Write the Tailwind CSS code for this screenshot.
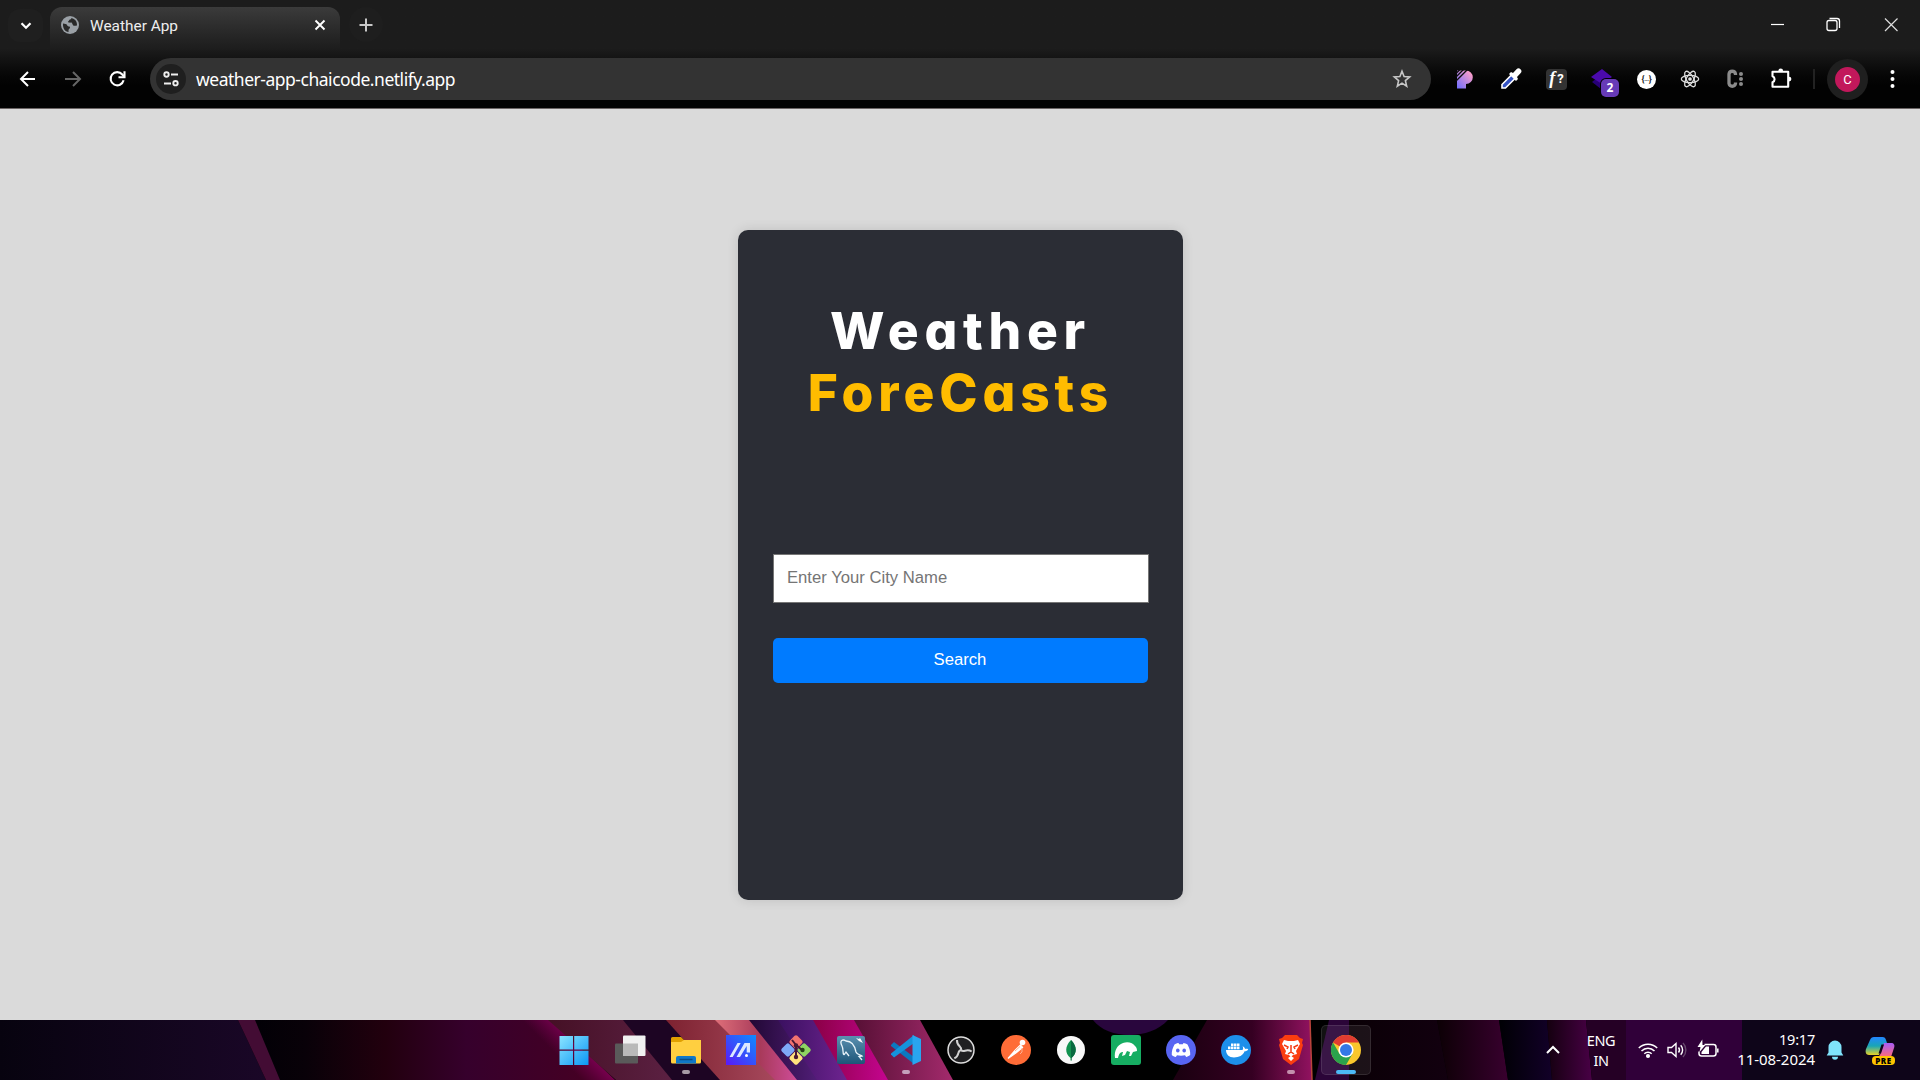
<!DOCTYPE html>
<html lang="en">
<head>
<meta charset="utf-8">
<title>Weather App</title>
<script src="https://cdn.jsdelivr.net/npm/@tailwindcss/browser@4"></script>
</head>
<body class="flex h-[1080px] w-[1920px] flex-col overflow-hidden bg-[#dadada] font-['Noto_Sans',sans-serif]">

<!-- Browser tab strip -->
<header class="flex h-[109px] shrink-0 flex-col border-b border-[#6b6565] bg-linear-to-b from-[#1c1c1c] from-45% to-[#020202] to-80%">
  <div class="flex h-[50px] items-start pt-[7px]">
    <div class="ml-2 mt-0.5 flex h-[33px] w-[35px] items-center justify-center rounded-xl bg-[#1f1f1f]">
      <svg class="size-5" viewBox="0 0 20 20" fill="none" stroke="#fff" stroke-width="2.2"><path d="M5.5 7.2l4.5 4.6 4.5-4.6"/></svg>
    </div>
    <div class="ml-[7px] flex h-[43px] w-[290px] items-start rounded-t-xl bg-linear-to-b from-[#3b3b3b] to-[#1c1c1c] pt-[9px]">
      <svg class="ml-[11px] size-[18px]" viewBox="0 0 18 18"><circle cx="9" cy="9" r="9" fill="#9aa0a6"/><path d="M2 7.4c2 .2 3.500 .4 4 1.600s1.500 1.500 2.600 1.500c.8 1 .4 2-.6 2.500-.7 1-.5 2-.4 3C4 15.500 1.600 12.300 2 7.400zM10.500 2.100c-.3 1-1.100 1.500-2.100 1.700-.4 1-1 1.600-1.500 2 .6 1.200 2.600.8 3.700.8 1.100 1.200.8 2.400 2 3.100.9.300 2-.1 3.400-.3.300-3.700-2-6.500-5.500-7.300z" fill="#292929"/></svg>
      <span class="ml-[11px] flex-1 pt-px font-[Roboto] text-[15.400px] leading-[18px] text-[#eee]">Weather App</span>
      <svg class="mr-[11px] size-[18px]" viewBox="0 0 18 18" stroke="#fff" stroke-width="1.900"><path d="M4.500 4.500l9 9M13.500 4.500l-9 9"/></svg>
    </div>
    <div class="ml-[9px] mt-0 flex h-[35px] w-[34px] items-center justify-center rounded-full bg-[#1e1e1e]">
      <svg class="size-5" viewBox="0 0 20 20" stroke="#c8c8c8" stroke-width="2"><path d="M10 3.500v13M3.500 10h13"/></svg>
    </div>
    <div class="ml-auto mt-[7px] flex h-5 items-center pr-[19px]">
      <svg class="size-5" viewBox="0 0 20 20" stroke="#fff" stroke-width="1.200"><path d="M4 10.500h13"/></svg>
      <svg class="ml-9 size-5" viewBox="0 0 20 20" fill="none" stroke="#fff" stroke-width="1.300"><rect x="4" y="6.500" width="10" height="10" rx="2"/><path d="M6.500 4.500h7.500a2.500 2.500 0 0 1 2.500 2.500v7"/></svg>
      <svg class="ml-[38px] size-5" viewBox="0 0 20 20" stroke="#ddd" stroke-width="1.200"><path d="M4 4.500l12.500 12.500M16.500 4.500l-12.500 12.500"/></svg>
    </div>
  </div>

  <!-- Toolbar -->
  <div class="flex h-[58px] items-center">
    <svg class="ml-[17px] size-[22px]" viewBox="0 0 22 22" fill="none" stroke="#fff" stroke-width="2"><path d="M18 11H4.500M11 4l-7 7 7 7"/></svg>
    <svg class="ml-[23px] size-[22px]" viewBox="0 0 22 22" fill="none" stroke="#666" stroke-width="2"><path d="M3 11h14.500M11 4l7 7-7 7"/></svg>
    <svg class="ml-[22px] size-[22px]" viewBox="0 0 22 22" fill="none" stroke="#fff" stroke-width="2.100"><path d="M17.600 12.300A6.600 6.600 0 1 1 16.300 6.500l1.800 2"/><path d="M18.500 3.200v6h-6"/></svg>
    <div class="ml-[22px] flex h-[42px] w-[1281px] items-center rounded-full bg-[#333]">
      <div class="ml-[6px] flex size-[30px] items-center justify-center rounded-full bg-[#1f1f1f]">
        <svg class="size-5" viewBox="0 0 20 20" fill="none" stroke="#eee" stroke-width="1.900"><circle cx="5.500" cy="5.500" r="2.200"/><path d="M10 5.500h7M3 14.500h7"/><circle cx="14.500" cy="14.200" r="2.200"/></svg>
      </div>
      <span class="ml-[10px] flex-1 text-[17.500px] tracking-[-0.480px] text-white">weather-app-chaicode.netlify.app</span>
      <svg class="mr-[18px] size-[22px]" viewBox="0 0 22 22" fill="none" stroke="#c7c7c7" stroke-width="1.600"><path d="M11 3.200l2.100 5.300 5.600.4-4.300 3.700 1.300 5.600-4.700-3-4.700 3 1.300-5.600-4.300-3.700 5.600-.4z"/></svg>
    </div>

    <div class="ml-[23px] flex w-[338px] items-center justify-between">
      <svg class="size-[22px]" viewBox="0 0 22 22"><defs><linearGradient id="pan" x1="1" y1="0" x2="0" y2="1"><stop offset="0.100" stop-color="#ff9fc8"/><stop offset="1" stop-color="#6d6dff"/></linearGradient></defs><path d="M3 2.500h9a6.800 6.800 0 1 1 0 13.600V20.500H3z" fill="url(#pan)"/><path d="M2 9l7.500-7.500M2 13L13.500 1.500M2 5.500L6 1.500" stroke="#0d0d0d" stroke-width="1.400"/></svg>
      <svg class="size-[22px]" viewBox="0 0 22 22"><path d="M2 20v-3.500L11.500 7l3.500 3.500L5.500 20z" fill="#3453c4" stroke="#fff" stroke-width="1.600"/><path d="M11 4l2 1 3.500-3.700a2.600 2.600 0 0 1 4 4L17 9l1 2-2 2-7-7z" fill="#fff"/></svg>
      <div class="flex size-[21px] items-center justify-center rounded bg-[#333] font-['Liberation_Serif',serif] text-[18px] font-bold leading-[18px] text-white"><i class="-translate-y-px pr-[2px]">f</i><span class="font-[Roboto] text-[13px]">?</span></div>
      <div class="relative size-[22px]">
        <svg class="size-[22px]" viewBox="0 0 22 22"><path d="M1 14l10-8 8 8-9 7z" fill="#270076"/><path d="M0 9l11-8 10 8-10 7z" fill="#4b0aad"/></svg>
        <span class="absolute -right-[6px] top-[11px] flex h-[18px] w-[18px] items-center justify-center rounded-[5px] bg-[#673ab7] text-xs font-bold text-white ring-1 ring-black">2</span>
      </div>
      <div class="flex size-[19px] items-center justify-center rounded-full bg-white font-[Roboto] text-[9px] font-bold leading-none tracking-[-0.200px] text-[#222]">{<span class="text-[6px]">...</span>}</div>
      <svg class="size-[20px]" viewBox="0 0 20 20" fill="none" stroke="#ddd" stroke-width="1.300"><ellipse cx="10" cy="10" rx="8.700" ry="3.600"/><ellipse cx="10" cy="10" rx="8.700" ry="3.600" transform="rotate(60 10 10)"/><ellipse cx="10" cy="10" rx="8.700" ry="3.600" transform="rotate(120 10 10)"/><circle cx="10" cy="10" r="1.200" fill="#fff"/></svg>
      <svg class="size-[22px]" viewBox="0 0 22 22"><path d="M11.500 7V6A3.300 3.300 0 0 0 5 6v9.500a3.300 3.300 0 0 0 6.500 0v-1" fill="none" stroke="#8b8b8b" stroke-width="3.300"/><g fill="#8b8b8b"><circle cx="17" cy="6" r="2"/><circle cx="17" cy="11" r="2"/><circle cx="17" cy="16" r="2"/></g></svg>
      <svg class="size-[22px]" viewBox="0 0 22 22"><path d="M2.500 3.800h15.700v14.900H2.500v-4.400a3.200 3.200 0 0 0 0-6z" fill="none" stroke="#fff" stroke-width="2.100" stroke-linejoin="round"/><path d="M8.300 3a2.400 2.400 0 0 1 4.800 0zM19 8.700a2.400 2.400 0 0 1 0 4.800z" fill="#fff"/></svg>
    </div>
    <div class="ml-[21px] h-5 w-[2px] bg-[#222]"></div>
    <div class="ml-[12px] flex size-[41px] items-center justify-center rounded-full bg-[#1f1f1f]">
      <div class="flex size-[25px] items-center justify-center rounded-full bg-[#c2185b] font-[Roboto] text-[13px] leading-none text-white">C</div>
    </div>
    <svg class="ml-[13px] size-[22px]" viewBox="0 0 22 22" fill="#fff"><circle cx="11.500" cy="4" r="2"/><circle cx="11.500" cy="11" r="2"/><circle cx="11.500" cy="18" r="2"/></svg>
  </div>
</header>

<!-- Weather page -->
<main class="flex h-[911px] shrink-0 justify-center pt-[121px]">
  <section class="ml-px flex h-[670px] w-[445px] flex-col rounded-[10px] bg-[#2b2d35] px-[35px] pt-[69px] shadow-[0_0_12px_rgba(0,0,0,0.120)]">
    <h1 class="h-[255px] text-center font-[Inter] text-[51.500px] font-extrabold leading-[62px] text-white [font-feature-settings:'cv11']">
      <span class="block tracking-[5.700px]">Weather</span>
      <span class="block tracking-[4.900px] text-[#ffbc00]">ForeCasts</span>
    </h1>
    <input type="text" placeholder="Enter Your City Name" class="h-[49px] w-[376px] border border-[#767676] bg-white px-[13px] pb-px font-['Liberation_Sans',sans-serif] text-[16.670px] placeholder:text-[#757575]">
    <button class="mt-[35px] h-[45px] w-[375px] rounded-[5px] bg-[#007bff] pr-px pb-[2px] font-['Liberation_Sans',sans-serif] text-[16.670px] text-white">Search</button>
  </section>
</main>

<!-- Taskbar -->
<footer class="relative h-[60px] shrink-0 bg-black">
  <svg class="absolute inset-0 h-[60px] w-[1920px]" viewBox="0 0 1920 60">
    <defs>
      <linearGradient id="b1"><stop offset="0" stop-color="#07030f"/><stop offset="1" stop-color="#1a0727"/></linearGradient>
      <linearGradient id="b2" gradientUnits="userSpaceOnUse" x1="256" y1="0" x2="580" y2="0"><stop offset="0" stop-color="#020006"/><stop offset=".15" stop-color="#080108"/><stop offset=".4" stop-color="#22000e"/><stop offset=".65" stop-color="#36002c"/><stop offset="1" stop-color="#440024"/></linearGradient>
      <linearGradient id="pk" gradientUnits="userSpaceOnUse" x1="550" y1="28" x2="578" y2="0"><stop offset="0" stop-color="#8d0064" stop-opacity="0"/><stop offset="1" stop-color="#a3006f"/></linearGradient>
      <linearGradient id="b3"><stop offset="0" stop-color="#451025"/><stop offset="1" stop-color="#5c2143"/></linearGradient>
      <linearGradient id="b4"><stop offset="0" stop-color="#7d2230"/><stop offset="1" stop-color="#a84a5e"/></linearGradient>
      <linearGradient id="b5"><stop offset="0" stop-color="#de6f79"/><stop offset=".5" stop-color="#a83a5a"/><stop offset="1" stop-color="#d650a5"/></linearGradient>
      <linearGradient id="b6"><stop offset="0" stop-color="#210834"/><stop offset="1" stop-color="#511e78"/></linearGradient>
      <linearGradient id="bp"><stop offset="0" stop-color="#3a1060"/><stop offset="1" stop-color="#6f2491"/></linearGradient>
      <linearGradient id="b7"><stop offset="0" stop-color="#8a0045"/><stop offset="1" stop-color="#c60591"/></linearGradient>
      <linearGradient id="b8"><stop offset="0" stop-color="#571035"/><stop offset="1" stop-color="#a32a6c"/></linearGradient>
      <linearGradient id="b9" gradientUnits="userSpaceOnUse" x1="1180" y1="0" x2="1311" y2="0"><stop offset="0" stop-color="#1c0011"/><stop offset=".55" stop-color="#350022"/><stop offset="1" stop-color="#90125f"/></linearGradient>
      <linearGradient id="c1"><stop offset="0" stop-color="#0a0006"/><stop offset="1" stop-color="#12000f"/></linearGradient>
      <linearGradient id="c2"><stop offset="0" stop-color="#0c0005"/><stop offset="1" stop-color="#38002e"/></linearGradient>
      <linearGradient id="c3"><stop offset="0" stop-color="#000004"/><stop offset="1" stop-color="#120028"/></linearGradient>
      <linearGradient id="c4"><stop offset="0" stop-color="#14000f"/><stop offset="1" stop-color="#480045"/></linearGradient>
    </defs>
    <path d="M0 0h238l28 60H0z" fill="url(#b1)"/>
    <path d="M238 0h20l26 60h-18z" fill="#430c34"/>
    <path d="M255 0h300l60 60H280z" fill="url(#b2)"/>
    <path d="M515 0h36l64 60h-50z" fill="url(#pk)"/>
    <path d="M548 0h76l52 60h-60z" fill="url(#b3)"/>
    <path d="M623 0h55l44 60h-50z" fill="#1d0523"/>
    <path d="M666 0h51l63 60h-60z" fill="url(#b4)"/>
    <path d="M715 0h36l54 60h-30z" fill="url(#b5)"/>
    <path d="M749 0h32l38 60h-22z" fill="url(#b6)"/>
    <path d="M778 0h37l34 60h-32z" fill="url(#bp)"/>
    <path d="M813 0h43l34 60h-43z" fill="url(#b7)"/>
    <path d="M854 0h66l33 60h-65z" fill="url(#b8)"/>
    <path d="M1093 0c15 20 57 20 75 0z" fill="#29063d"/>
    <path d="M1207 0h103l2 60h-139z" fill="url(#b9)"/>
    <path d="M1310 0l2 60" stroke="#b9443b" stroke-width="1.500"/>
    <path d="M1329 0h20v60h-34z" fill="#2b0538"/>
    <path d="M1349 0h88l11 60h-99z" fill="url(#c1)"/>
    <path d="M1437 0h62l9 60h-60z" fill="url(#c2)"/>
    <path d="M1499 0h48l5 60h-44z" fill="url(#c3)"/>
    <path d="M1547 0h39l6 60h-40z" fill="url(#c4)"/>
    <path d="M1586 0h42v60h-36z" fill="#250025"/>
    <path d="M1626 0h116v60h-116z" fill="#300039"/>
    <path d="M1742 0h178v60h-178z" fill="#0e0519"/>
  </svg>

  <div class="relative flex h-[60px] items-center">
    <nav class="ml-[546px] flex h-full items-center">
      <div class="flex w-[55px] justify-center pl-px"><svg class="size-[30px]" viewBox="0 0 30 30"><defs><linearGradient id="win" x1="0" y1="0" x2="1" y2="1"><stop offset="0" stop-color="#8be5ff"/><stop offset="1" stop-color="#0b96f5"/></linearGradient></defs><path d="M.5 1H14v13.500H.5zM15.200 1h14.300v13.500H15.200zM.5 15.700H14V30H.5zM15.200 15.700h14.300V30H15.200z" fill="url(#win)"/></svg></div>
      <div class="flex w-[55px] justify-center pl-[3px]"><svg class="size-[32px]" viewBox="0 0 32 32"><rect x="1" y="9.500" width="23" height="20" rx="1" fill="#5a5a5a"/><rect x="9" y="1.500" width="22.500" height="20.500" rx="1" fill="#f1f1f1"/><path d="M9 9.500h15V22H9z" fill="#b9b9b9"/></svg></div>
      <div class="relative flex h-full w-[55px] items-center justify-center pl-1"><svg class="size-[30px]" viewBox="0 0 30 30"><path d="M0 3.500A1.500 1.500 0 0 1 1.500 2H10l3 3h15.500A1.500 1.500 0 0 1 30 6.500V8H0z" fill="#e0a000"/><path d="M0 7h10l3-2h17v22a1.500 1.500 0 0 1-1.500 1.500h-27A1.500 1.500 0 0 1 0 27z" fill="#ffcf40"/><path d="M5 28.500V23a2 2 0 0 1 2-2h16a2 2 0 0 1 2 2v5.500z" fill="#0f78c8"/><path d="M8.500 24.500h13" stroke="#084d86" stroke-width="1.500"/></svg><i class="absolute bottom-[6px] left-[26px] h-1 w-2 rounded-full bg-[#a79aa6]"></i></div>
      <div class="flex w-[55px] justify-center pl-1"><svg class="size-[30px]" viewBox="0 0 30 30"><defs><linearGradient id="my" x1="1" y1="0" x2="0" y2="1"><stop offset="0" stop-color="#0d8dff"/><stop offset="1" stop-color="#5b18f8"/></linearGradient></defs><path d="M0 0h30v30H0z" fill="url(#my)"/><path d="M3.500 22L11.500 8h3.200L6.700 22zM10.500 22L18.500 8H24v9.500h-3.300V11L14 22z" fill="#dbe9ff"/><circle cx="20.500" cy="20.500" r="1.500" fill="#fff"/></svg></div>
      <div class="flex w-[55px] justify-center pl-1"><svg class="size-[32px]" viewBox="0 0 32 32"><g transform="rotate(45 16 16)"><rect x="5" y="5" width="10.500" height="10.500" rx="2" fill="#f37370"/><rect x="16.500" y="5" width="10.500" height="10.500" rx="2" fill="#8fd461"/><rect x="5" y="16.500" width="10.500" height="10.500" rx="2" fill="#7ea9f7"/><rect x="16.500" y="16.500" width="10.500" height="10.500" rx="2" fill="#ffe27d"/></g><path d="M12 6l4 5v11M16 11l6 5" stroke="#4a1834" stroke-width="2" fill="none"/><circle cx="16" cy="23" r="2.200" fill="#4a1834"/><circle cx="22.500" cy="16" r="2.200" fill="#254315"/><circle cx="16" cy="11.500" r="2.200" fill="#4a1834"/></svg></div>
      <div class="flex w-[55px] justify-center pl-1"><svg class="size-[28px]" viewBox="0 0 28 28"><defs><linearGradient id="sql" x2="0" y2="1"><stop stop-color="#5b91b0"/><stop offset="1" stop-color="#1d5578"/></linearGradient></defs><rect width="28" height="28" rx="2" fill="url(#sql)"/><path d="M7 19c-2-3 0-5-2-9-3-6 1-7 4-5 6 0 9 6 10 11 1 3 5 3 6 4l-3 .5 3 3.500M7 19l2-3 3 4" fill="none" stroke="#e9f4fa" stroke-width="1.300"/><path d="M19 2l3 1 1-1 3 5-2-1-2-1z" fill="#fff"/></svg></div>
      <div class="relative flex h-full w-[55px] items-center justify-center pl-1"><svg class="size-[30px]" viewBox="0 0 30 30"><path d="M0 10l3-3L23 22v7L0 11z" fill="#0b78c0"/><path d="M0 19.500l3 3L23 8V0L0 18.500z" fill="#1593dc"/><path d="M21.500 0L30 4v22l-8.500 4z" fill="#29a5ef"/></svg><i class="absolute bottom-[6px] left-[26px] h-1 w-2 rounded-full bg-[#c5a0bb]"></i></div>
      <div class="flex w-[55px] justify-center pl-1"><svg class="size-[28px]" viewBox="0 0 28 28" fill="none"><circle cx="14" cy="14" r="13" fill="#202022" stroke="#ddd" stroke-width="1.500"/><g stroke="#d2d2d2" stroke-width="2"><path d="M14 14c1.500-4-4.500-3.500-4-10"/><path d="M14 14c1.500-4-4.500-3.500-4-10" transform="rotate(120 14 14)"/><path d="M14 14c1.500-4-4.500-3.500-4-10" transform="rotate(240 14 14)"/></g></svg></div>
      <div class="flex w-[55px] justify-center pl-1"><svg class="size-[30px]" viewBox="0 0 30 30"><circle cx="15" cy="15" r="15" fill="#ff6c37"/><circle cx="21.500" cy="7.500" r="2.800" fill="#fff"/><path d="M19.500 10l2 2.500-6 5-8.500 6 7-8z" fill="#fff" stroke="#fff" stroke-width="1.300"/><path d="M14 16l5-4.500M21 13v4l-2 2" stroke="#ffb092" fill="none"/></svg></div>
      <div class="flex w-[55px] justify-center pl-1"><svg class="size-[28px]" viewBox="0 0 28 28"><circle cx="14" cy="14" r="14" fill="#f8f8f8"/><path d="M14 4c6 6 6.500 13 .5 18v2.500h-1V22C7.500 17 8 10 14 4z" fill="#12924f"/><path d="M14 4c6 6 6.500 13 .5 18v2.500H14z" fill="#08683f"/></svg></div>
      <div class="flex w-[55px] justify-center pl-1"><svg class="size-[30px]" viewBox="0 0 30 30"><rect width="30" height="30" rx="3" fill="#16ad62"/><path d="M4 23c-1-7 2-13 8-15 5-2 10 0 12 3 1 1 2 2 2 5l-4 1-2 4h-2l1-4-3-1-2 4-3 1 1-4c-3 0-4 2-5 6z" fill="#fff"/></svg></div>
      <div class="flex w-[55px] justify-center pl-1"><svg class="size-[30px]" viewBox="0 0 30 30"><circle cx="15" cy="15" r="15" fill="#5865f2"/><path d="M8.500 9.500c2-1.200 3.500-1.500 4-1.500l.7 1.200h3.600l.7-1.200c1 .1 3 .8 4 1.500 2 3.500 3 7 2.700 10.500-1.500 1.200-3 1.700-4 2l-1.200-1.800c-2.500.6-5.500.6-8 0L9.800 22c-1.500-.4-3-1.100-4-2-.3-3.500.7-7 2.700-10.500z" fill="#fff"/><ellipse cx="11.800" cy="15.500" rx="1.800" ry="2" fill="#5865f2"/><ellipse cx="18.200" cy="15.500" rx="1.800" ry="2" fill="#5865f2"/></svg></div>
      <div class="flex w-[55px] justify-center pl-1"><svg class="size-[30px]" viewBox="0 0 30 30"><circle cx="15" cy="15" r="15" fill="#1d8fea"/><path d="M5 15h16.500c1-1.200.6-2.600 0-3.700 1.500.6 2.500 1.500 2.500 2.700 1.200-.4 2.500-.2 3.200.2-.6 1.500-2 2.100-3.600 2.100C22 20.500 18 22.500 13 22.500c-5 0-8-3-8-7.500z" fill="#fff"/><path d="M7 11.600h2.500v2.700H7zM10 11.600h2.500v2.700H10zM13 11.600h2.500v2.700H13zM16 11.600h2.500v2.700H16zM10 8.500h2.500v2.600H10zM13 8.500h2.500v2.600H13zM16 8.500h2.500v2.600H16z" fill="#fff"/></svg></div>
      <div class="relative flex h-full w-[55px] items-center justify-center pl-1"><svg class="h-[30px] w-[26px]" viewBox="0 0 26 30"><path d="M7 0h12l3 3 3 1-1 4 1 2-4 14-8 6-8-6L1 10l1-2-1-4 3-1z" fill="#fb3d10"/><path d="M6 5l4 1h6l4-1 2 4-4 7 1 3-4 1-2 2-2-2-4-1 1-3-4-7zM10 23l3-2 3 2-3 3z" fill="#fff"/><path d="M6 10l4 2-1 2M20 10l-4 2 1 2M13 10v7M10 19l3-2 3 2" stroke="#f43a12" stroke-width="1.500" fill="none"/></svg><i class="absolute bottom-[6px] left-[26px] h-1 w-2 rounded-full bg-[#c490ad]"></i></div>
      <div class="relative ml-[5px] flex h-[50px] w-[50px] items-center justify-center rounded-[5px] border border-white/10 bg-white/7"><svg class="size-[30px]" viewBox="0 0 30 30"><circle cx="15" cy="15" r="15" fill="#f9c72c"/><path d="M15 15L2 7.500A15 15 0 0 1 28 7.500H15z" fill="#e03c31"/><path d="M2 7.500a15 15 0 0 0 13 22.500l6.500-11.300L8.500 18.700z" fill="#2ba24c"/><circle cx="15" cy="15" r="7.600" fill="#fff"/><circle cx="15" cy="15" r="6" fill="#3478e5"/></svg><i class="absolute bottom-0 left-[14px] h-1 w-5 rounded-full bg-[#4cb9f5]"></i></div>
    </nav>
    <div class="ml-auto flex h-full items-center text-white">
      <svg class="size-4" viewBox="0 0 16 16" fill="none" stroke="#fff" stroke-width="2"><path d="M2 11l6-6 6 6"/></svg>
      <div class="ml-[18px] w-[44px] pb-px text-center text-[14.500px] leading-[20px] tracking-[-0.400px]">ENG<br>IN</div>
      <svg class="ml-[15px] size-5" viewBox="0 0 20 20" fill="none" stroke="#fff" stroke-width="1.500"><path d="M.8 8a13 13 0 0 1 18.400 0M3.500 11a9 9 0 0 1 13 0M6.300 13.800a5.200 5.200 0 0 1 7.400 0"/><circle cx="10" cy="16" r="1.300" fill="#fff"/></svg>
      <svg class="ml-[9px] size-5" viewBox="0 0 20 20" fill="none" stroke="#fff" stroke-width="1.400"><path d="M1 7.500v5h3.500l4.500 4v-13l-4.500 4zM11.500 7.500a4 4 0 0 1 0 5M13.700 5.200a7 7 0 0 1 0 9.600"/><path d="M16 3a10 10 0 0 1 0 14" stroke="#66486c"/></svg>
      <svg class="ml-[10px] size-[22px]" viewBox="0 0 22 22" fill="none" stroke="#fff" stroke-width="1.500"><path d="M7.500 5.500h9A2.500 2.500 0 0 1 19 8v6.500a2.500 2.500 0 0 1-2.500 2.500H4.500A2.500 2.500 0 0 1 2 14.500v-2M20.800 9.500v4"/><path d="M4.500 15h7.500V7.500H9l-4.500 5.500z" fill="#fff" stroke="none"/><path d="M5.300.5L.5 8h3l-1 5 6-7h-3z" fill="#fff" stroke="none"/></svg>
      <div class="ml-[16px] flex w-[80px] flex-col items-end pb-[2px] text-[15px] leading-[20px]"><span class="text-[14.500px] tracking-[-0.200px]">19:17</span><span class="whitespace-nowrap tracking-[-0.050px]">11-08-2024</span></div>
      <svg class="ml-[10px] size-[20px]" viewBox="0 0 20 20" fill="#7fe3fb"><path d="M10 .5a6.500 6.500 0 0 1 6.500 6.500v5.500l1.800 3H1.700l1.800-3V7A6.500 6.500 0 0 1 10 .5zM7 16.800h6a3 3 0 0 1-6 0z"/></svg>
      <div class="relative ml-[20px] mr-[25px] size-[30px]">
        <svg class="size-[30px]" viewBox="0 0 30 30"><defs><linearGradient id="cp1" x2="0" y2="1"><stop stop-color="#2386ff"/><stop offset=".5" stop-color="#19a6b5"/><stop offset="1" stop-color="#e9d326"/></linearGradient><linearGradient id="cp2" x2="0" y2="1"><stop stop-color="#a75cf7"/><stop offset="1" stop-color="#ff6b76"/></linearGradient></defs><path d="M9 2h8.500c2 0 3 1 3.500 3l1 3-3 1-5 11H4c-3 0-4-3-3-6L5 5c.8-2 2-3 4-3z" fill="url(#cp1)"/><path d="M19 8h7c3 0 4 2 3 5l-3 9H13l2-2z" fill="url(#cp2)"/><path d="M16.500 9.500l-3 9h2.500l3-9z" fill="#0e0519"/></svg>
        <span class="absolute left-[7px] top-[21px] flex h-[9px] w-[23px] items-center justify-center rounded-sm bg-[#fdc500] text-[8px] font-black leading-none tracking-[0.500px] text-black">PRE</span>
      </div>
    </div>
  </div>
</footer>
</body>
</html>
